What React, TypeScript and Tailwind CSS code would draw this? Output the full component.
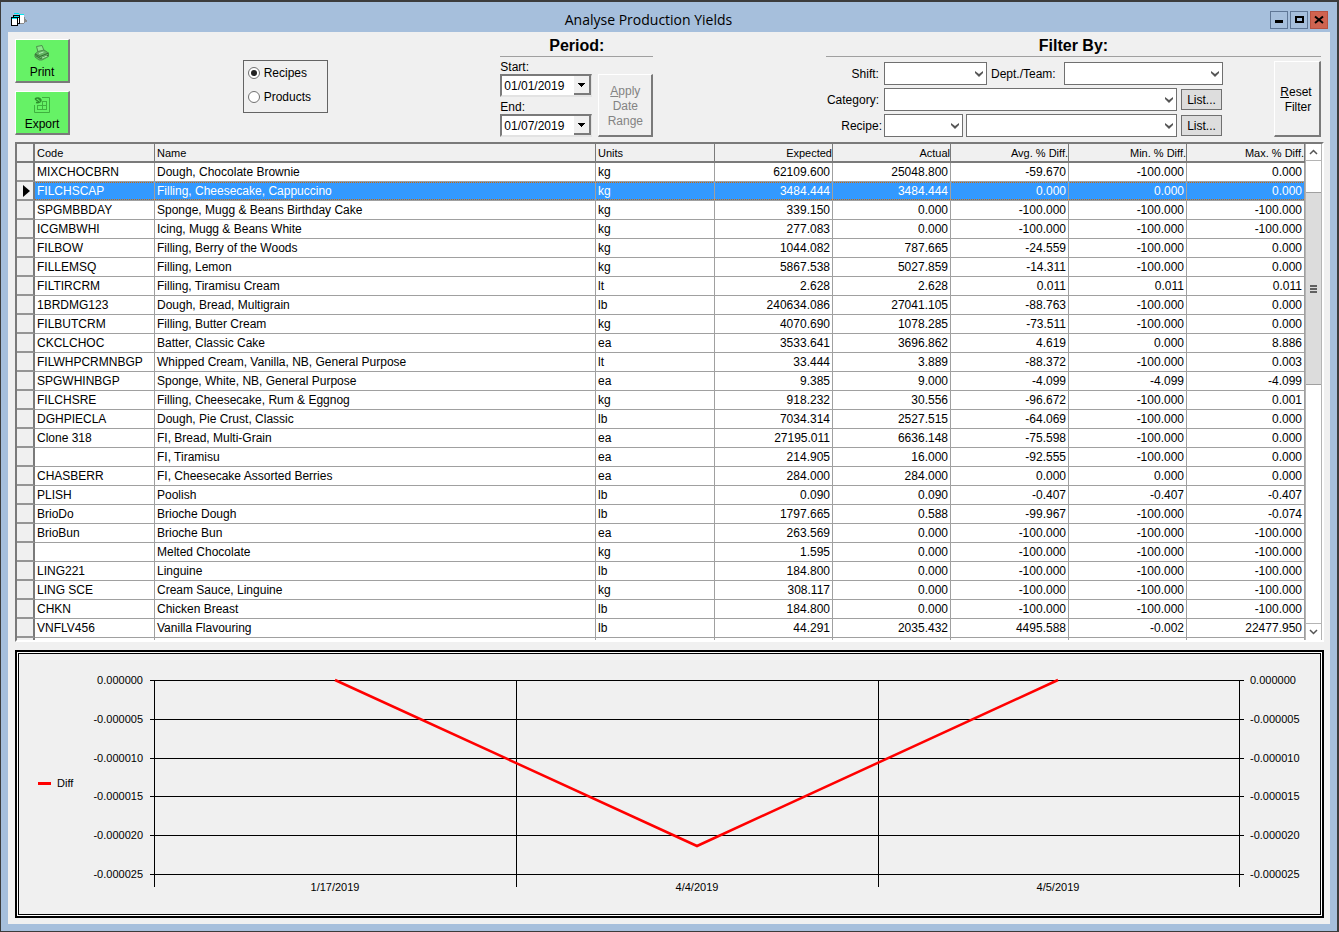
import { useState } from "react";
import type { ReactNode } from "react";

type Row = [string, string, string, string, string, string, string, string];

const rows: Row[] = [
  ["MIXCHOCBRN", "Dough, Chocolate Brownie", "kg", "62109.600", "25048.800", "-59.670", "-100.000", "0.000"],
  ["FILCHSCAP", "Filling, Cheesecake, Cappuccino", "kg", "3484.444", "3484.444", "0.000", "0.000", "0.000"],
  ["SPGMBBDAY", "Sponge, Mugg & Beans Birthday Cake", "kg", "339.150", "0.000", "-100.000", "-100.000", "-100.000"],
  ["ICGMBWHI", "Icing, Mugg & Beans White", "kg", "277.083", "0.000", "-100.000", "-100.000", "-100.000"],
  ["FILBOW", "Filling, Berry of the Woods", "kg", "1044.082", "787.665", "-24.559", "-100.000", "0.000"],
  ["FILLEMSQ", "Filling, Lemon", "kg", "5867.538", "5027.859", "-14.311", "-100.000", "0.000"],
  ["FILTIRCRM", "Filling, Tiramisu Cream", "lt", "2.628", "2.628", "0.011", "0.011", "0.011"],
  ["1BRDMG123", "Dough, Bread, Multigrain", "lb", "240634.086", "27041.105", "-88.763", "-100.000", "0.000"],
  ["FILBUTCRM", "Filling, Butter Cream", "kg", "4070.690", "1078.285", "-73.511", "-100.000", "0.000"],
  ["CKCLCHOC", "Batter, Classic Cake", "ea", "3533.641", "3696.862", "4.619", "0.000", "8.886"],
  ["FILWHPCRMNBGP", "Whipped Cream, Vanilla, NB, General Purpose", "lt", "33.444", "3.889", "-88.372", "-100.000", "0.003"],
  ["SPGWHINBGP", "Sponge, White, NB, General Purpose", "ea", "9.385", "9.000", "-4.099", "-4.099", "-4.099"],
  ["FILCHSRE", "Filling, Cheesecake, Rum & Eggnog", "kg", "918.232", "30.556", "-96.672", "-100.000", "0.001"],
  ["DGHPIECLA", "Dough, Pie Crust, Classic", "lb", "7034.314", "2527.515", "-64.069", "-100.000", "0.000"],
  ["Clone 318", "FI, Bread, Multi-Grain", "ea", "27195.011", "6636.148", "-75.598", "-100.000", "0.000"],
  ["", "FI, Tiramisu", "ea", "214.905", "16.000", "-92.555", "-100.000", "0.000"],
  ["CHASBERR", "FI, Cheesecake Assorted Berries", "ea", "284.000", "284.000", "0.000", "0.000", "0.000"],
  ["PLISH", "Poolish", "lb", "0.090", "0.090", "-0.407", "-0.407", "-0.407"],
  ["BrioDo", "Brioche Dough", "lb", "1797.665", "0.588", "-99.967", "-100.000", "-0.074"],
  ["BrioBun", "Brioche Bun", "ea", "263.569", "0.000", "-100.000", "-100.000", "-100.000"],
  ["", "Melted Chocolate", "kg", "1.595", "0.000", "-100.000", "-100.000", "-100.000"],
  ["LING221", "Linguine", "lb", "184.800", "0.000", "-100.000", "-100.000", "-100.000"],
  ["LING SCE", "Cream Sauce, Linguine", "kg", "308.117", "0.000", "-100.000", "-100.000", "-100.000"],
  ["CHKN", "Chicken Breast", "lb", "184.800", "0.000", "-100.000", "-100.000", "-100.000"],
  ["VNFLV456", "Vanilla Flavouring", "lb", "44.291", "2035.432", "4495.588", "-0.002", "22477.950"],
  ["", "", "", "", "", "", "", ""],
];

const headers = ["Code", "Name", "Units", "Expected", "Actual", "Avg. % Diff.", "Min. % Diff.", "Max. % Diff."];

const raised =
  "border-t border-l border-r-2 border-b-2 border-t-white border-l-white border-r-[#7a7a7a] border-b-[#7a7a7a]";

const focusRow =
  "bg-[#3399ff] bg-[image:linear-gradient(90deg,#cc6600_50%,transparent_50%),linear-gradient(90deg,#cc6600_50%,transparent_50%)] bg-[length:2px_1px] bg-repeat-x";
// The dots of neighbouring cells join into one line when odd-width columns swap phase.
const evenDots = "bg-[position:0_0,1px_100%]";
const oddDots = "bg-[position:1px_0,0_100%]";

function AppIcon() {
  return (
    <svg width="16" height="14" viewBox="0 0 16 14" shapeRendering="crispEdges" aria-hidden="true">
      <path d="M6 2h7v2h1v6H6z" fill="#fff" />
      <path d="M3 0h5v1h5v1H8V1H3z" fill="#00e5ee" />
      <path d="M13 4h1v2h1v1h1v2h-2v1h-1z" fill="#8a8a8a" />
      <path d="M9 10h4v1H9z" fill="#8a8a8a" />
      <path d="M2 2h7v9H7V4H2z" fill="#000" />
      <path d="M3 3h5v1H3z" fill="#00e5ee" />
      <path d="M0 4h7v9H0z" fill="#000" />
      <path d="M1 6h5v6H1z" fill="#fff" />
      <path d="M1 5h5v1H1z" fill="#00e5ee" />
      <path d="M7 5h1v5H7z" fill="#fff" />
    </svg>
  );
}

function PrinterIcon() {
  return (
    <svg width="16" height="16" viewBox="0 0 16 16" fill="none" stroke="#4d8f4d" aria-hidden="true">
      <path d="M4 7 L2.500 1.500 L8 .5 L10 5.500" fill="#8be88b" />
      <path d="M1 9 L4 6.500 L10 5 L14.500 8 L14.500 11.500 L8 15 L5 15 L1 12 Z" fill="#62b562" />
      <path d="M1 9 L6 11.500 L14.500 8M1.500 10.500 L6.500 13.500 L14.500 10" stroke="#2f6f2f" />
      <path d="M5 8.500 L9.500 7M8 13 L13 11" stroke="#b4efb4" />
    </svg>
  );
}

function SheetIcon() {
  return (
    <svg width="16" height="16" viewBox="0 0 16 16" fill="none" stroke="#3fb03f" aria-hidden="true">
      <path d="M8 .5 H15.500 V15.500 H.5 V8" />
      <path d="M3 8.500 H13M3 12.500 H13M3.500 8 V13M8.500 4 V13M12.500 4 V13M8 4.500 H13" />
      <path d="M1 2 C3 0 6 1 7 3 C7 5 5 6 2 5.500M1 2 L5 5M4 1 L7 4" stroke="#2d8f2d" strokeWidth="1.500" />
    </svg>
  );
}

function ActionButton({ icon, label }: { icon: ReactNode; label: string }) {
  return (
    <button
      type="button"
      className={`flex h-11 w-[55px] flex-col items-center justify-end gap-1 bg-[#66f266] pb-0.5 leading-[14px] ${raised}`}
    >
      {icon}
      {label}
    </button>
  );
}

function Combo({ label, className }: { label: string; className: string }) {
  return (
    <span className={`relative flex ${className}`}>
      <select aria-label={label} className="h-[23px] w-full appearance-none border border-[#707070] bg-white" />
      <svg
        width="8"
        height="6"
        viewBox="0 0 8 6"
        className="pointer-events-none absolute top-[9px] right-1"
        aria-hidden="true"
      >
        <path d="M0 0 L4 3 L8 0 V2 L4 6 L0 2 Z" fill="#555" />
      </svg>
    </span>
  );
}

function DateField({ id, label, value }: { id: string; label: string; value: string }) {
  return (
    <div className="flex flex-col">
      <label htmlFor={id} className="h-[15px] leading-4">
        {label}
      </label>
      <div className="flex h-[23px] w-[92px] border-2 border-r border-t-[#7a7a7a] border-r-[#e3e3e3] border-b-[#e3e3e3] border-l-[#7a7a7a] bg-white">
        <input id={id} defaultValue={value} className="min-w-0 flex-1 pl-0.5 outline-none" />
        <button
          type="button"
          aria-label={`Choose ${label}`}
          className="flex w-[17px] items-center justify-center border-r-2 border-b-2 border-[#7a7a7a] bg-[#f0f0f0]"
        >
          <svg width="7" height="4" viewBox="0 0 7 4" shapeRendering="crispEdges" aria-hidden="true">
            <path d="M0 0h7v1H6v1H5v1H4v1H3V3H2V2H1V1H0z" />
          </svg>
        </button>
      </div>
    </div>
  );
}

function ListButton() {
  return (
    <button type="button" className="h-[21px] w-[41px] border border-[#707070] bg-[#dddddd]">
      List...
    </button>
  );
}

function TitleBar() {
  return (
    <header className="flex h-[30px] items-center pt-1.5 pr-0.5 pl-[3px]">
      <AppIcon />
      <h1 className="flex-1 text-center font-['Open_Sans',sans-serif] text-[14px] leading-5">
        Analyse Production Yields
      </h1>
      <div className="flex gap-0.5">
        <button
          type="button"
          aria-label="Minimise"
          className="flex h-[18px] w-[18px] items-center justify-center border border-[#5f7796]"
        >
          <svg width="10" height="10" viewBox="0 0 10 10" shapeRendering="crispEdges" aria-hidden="true">
            <path d="M1 5h8v3H1z" />
          </svg>
        </button>
        <button
          type="button"
          aria-label="Maximise"
          className="flex h-[18px] w-[18px] items-center justify-center border border-[#5f7796]"
        >
          <svg width="10" height="10" viewBox="0 0 10 10" shapeRendering="crispEdges" aria-hidden="true">
            <path d="M1 1h9v7H1zM3 3v3h5V3z" fillRule="evenodd" />
          </svg>
        </button>
        <button
          type="button"
          aria-label="Close"
          className="flex h-[18px] w-[18px] items-center justify-center border border-[#b8503f] bg-[#cf6350]"
        >
          <svg width="10" height="10" viewBox="0 0 10 10" aria-hidden="true">
            <path d="M1 1.500 L9 8 M9 1.500 L1 8" stroke="#000" strokeWidth="2" />
          </svg>
        </button>
      </div>
    </header>
  );
}

function Toolbar() {
  const [kind, setKind] = useState("Recipes");
  return (
    <div className="flex h-[110px] items-start justify-between pr-[3px]">
      <div className="flex flex-col gap-2 pt-[7px]">
        <ActionButton icon={<PrinterIcon />} label="Print" />
        <ActionButton icon={<SheetIcon />} label="Export" />
      </div>

      <fieldset className="mt-7 flex h-[53px] w-[85px] flex-col gap-2 border border-[#646464] pt-1 pl-1">
        {["Recipes", "Products"].map((option) => (
          <label key={option} className="flex items-center gap-1 leading-4">
            <input
              type="radio"
              name="kind"
              checked={kind === option}
              onChange={() => setKind(option)}
              className="flex h-3 w-3 appearance-none items-center justify-center rounded-full border border-[#707070] bg-white before:h-1.5 before:w-1.5 before:rounded-full checked:before:bg-[#222]"
            />
            {option}
          </label>
        ))}
      </fieldset>

      <section className="w-[153px] pt-1">
        <h2 className="border-b border-[#a0a0a0] text-center text-[16px] leading-5 font-bold">Period:</h2>
        <div className="flex justify-between pt-0.5">
          <div className="flex flex-col gap-0.5">
            <DateField id="start" label="Start:" value="01/01/2019" />
            <DateField id="end" label="End:" value="01/07/2019" />
          </div>
          <button
            type="button"
            disabled
            className={`mt-[15px] flex h-[63px] w-[55px] flex-col items-center justify-center pt-0.5 leading-[15px] text-[#838383] ${raised}`}
          >
            <span>
              <u>A</u>pply
            </span>
            <span>Date</span>
            <span>Range</span>
          </button>
        </div>
      </section>

      <section className="w-[495px] pt-1">
        <h2 className="border-b border-[#a0a0a0] text-center text-[16px] leading-5 font-bold">Filter By:</h2>
        <div className="flex justify-between pt-1">
          <div className="flex flex-col gap-[3px] pt-px">
            <div className="flex items-center">
              <span className="w-[53px] text-right">Shift:</span>
              <Combo label="Shift" className="ml-[5px] w-[103px]" />
              <span className="ml-1 w-[73px]">Dept./Team:</span>
              <Combo label="Dept./Team" className="w-[159px]" />
            </div>
            <div className="flex items-center">
              <span className="w-[53px] text-right">Category:</span>
              <Combo label="Category" className="mr-1 ml-[5px] w-[293px]" />
              <ListButton />
            </div>
            <div className="flex items-center">
              <span className="w-[56px] text-right">Recipe:</span>
              <Combo label="Recipe code" className="ml-0.5 w-[79px]" />
              <Combo label="Recipe name" className="mr-1 ml-[3px] w-[211px]" />
              <ListButton />
            </div>
          </div>
          <button
            type="button"
            className={`flex h-[76px] w-[47px] flex-col items-center justify-center pt-0.5 pr-0.5 leading-[15px] ${raised}`}
          >
            <span>
              <u>R</u>eset
            </span>
            <span className="pl-1">Filter</span>
          </button>
        </div>
      </section>
    </div>
  );
}

function YieldTable() {
  const [selected, setSelected] = useState(1);
  return (
    <div className="flex h-[500px] overflow-hidden border-2 border-t-[#7a7a7a] border-r-white border-b-white border-l-[#7a7a7a] bg-white">
      <div className="min-w-0 flex-1 overflow-hidden">
        <table className="w-full table-fixed border-separate border-spacing-0">
          <colgroup>
            <col className="w-[18px]" />
            <col className="w-[120px]" />
            <col />
            <col className="w-[119px]" />
            <col className="w-[118px]" />
            <col className="w-[118px]" />
            <col className="w-[118px]" />
            <col className="w-[118px]" />
            <col className="w-[118px]" />
          </colgroup>
          <thead>
            <tr className="h-[19px] bg-[#f0f0f0] text-[11px] leading-[15px]">
              <th aria-label="Row marker" className="border-r-2 border-b-2 border-[#7a7a7a] p-0" />
              {headers.map((header, i) => (
                <th
                  key={header}
                  className={`border-r border-b-2 border-[#7a7a7a] pt-0.5 pb-0 font-normal whitespace-nowrap ${
                    i < 3 ? "pr-0 pl-0.5 text-left" : "px-0 text-right"
                  }`}
                >
                  {header}
                </th>
              ))}
            </tr>
          </thead>
          <tbody>
            {rows.map((row, r) => (
              <tr
                key={r}
                onClick={() => setSelected(r)}
                className={`h-[19px] leading-[18px] ${r === selected ? "text-white" : ""}`}
              >
                <td className="border-r-2 border-b-2 border-r-[#7a7a7a] border-b-[#959595] bg-[#f0f0f0] p-0">
                  {r === selected && (
                    <svg width="7" height="12" viewBox="0 0 7 12" className="ml-[6px]" aria-hidden="true">
                      <path d="M0 0 L7 6 L0 12 Z" fill="#000" />
                    </svg>
                  )}
                </td>
                {row.map((cell, c) => (
                  <td
                    key={c}
                    className={`border-r border-b border-[#a0a0a0] py-0 whitespace-nowrap ${
                      c < 3 ? "pr-0 pl-0.5" : "pr-0.5 pl-0 text-right"
                    } ${r === selected ? `${focusRow} ${c === 2 ? evenDots : oddDots}` : ""}`}
                  >
                    {cell}
                  </td>
                ))}
              </tr>
            ))}
          </tbody>
        </table>
      </div>
      <div className="flex w-[17px] flex-col border-r border-l border-[#b4b4b4] bg-white">
        <button
          type="button"
          aria-label="Scroll up"
          className="flex h-[17px] items-center justify-center border-b border-[#b4b4b4]"
        >
          <svg width="9" height="6" viewBox="0 0 9 6" fill="none" stroke="#555" strokeWidth="1.500" aria-hidden="true">
            <path d="M1 5 L4.500 1.500 L8 5" />
          </svg>
        </button>
        <div className="flex-1 pt-[31px]">
          <div className="flex h-[193px] flex-col items-center justify-center gap-px border-y border-[#a0a0a0] bg-[#dcdcdc]">
            <span className="h-0.5 w-[7px] bg-[#606060]" />
            <span className="h-0.5 w-[7px] bg-[#606060]" />
            <span className="h-0.5 w-[7px] bg-[#606060]" />
          </div>
        </div>
        <button
          type="button"
          aria-label="Scroll down"
          className="flex h-[17px] items-center justify-center border-t border-[#b4b4b4]"
        >
          <svg width="9" height="6" viewBox="0 0 9 6" fill="none" stroke="#555" strokeWidth="1.500" aria-hidden="true">
            <path d="M1 1 L4.500 4.500 L8 1" />
          </svg>
        </button>
      </div>
    </div>
  );
}

const ticks = [
  { y: 26, label: "0.000000" },
  { y: 65, label: "-0.000005" },
  { y: 104, label: "-0.000010" },
  { y: 142, label: "-0.000015" },
  { y: 181, label: "-0.000020" },
  { y: 220, label: "-0.000025" },
];
const dates = [
  { x: 316, label: "1/17/2019" },
  { x: 678, label: "4/4/2019" },
  { x: 1039, label: "4/5/2019" },
];
const dividers = [135, 497, 859, 1220];

function DiffChart() {
  return (
    <div className="mt-2 border-2 border-black bg-white p-px">
      <div className="border border-black bg-[#f0f0f0]">
        <svg viewBox="0 0 1301 260" className="block w-full" fontSize="11" role="img" aria-label="Diff by date">
          <g fill="#000" shapeRendering="crispEdges">
            {ticks.map((t) => (
              <rect key={t.y} x="131" y={t.y} width="1094" height="1" />
            ))}
            {dividers.map((x) => (
              <rect key={x} x={x} y="26" width="1" height="207" />
            ))}
          </g>
          {ticks.map((t) => (
            <g key={t.y}>
              <text x="124" y={t.y + 4} textAnchor="end">
                {t.label}
              </text>
              <text x="1231" y={t.y + 4}>
                {t.label}
              </text>
            </g>
          ))}
          {dates.map((d) => (
            <text key={d.label} x={d.x} y="237" textAnchor="middle">
              {d.label}
            </text>
          ))}
          <path d="M316 26 L678 192 L1039 26" fill="none" stroke="#f00" strokeWidth="2.500" />
          <rect x="19" y="128" width="13" height="3" fill="#f00" />
          <text x="38" y="133">
            Diff
          </text>
        </svg>
      </div>
    </div>
  );
}

export default function App() {
  return (
    <div className="border border-t-2 border-r-2 border-[#3c3c3c] bg-[#a6bfdc] px-[7px] pb-[7px] font-['Liberation_Sans',Arial,sans-serif] text-[12px] text-black">
      <TitleBar />
      <main className="bg-[#f0f0f0] pr-1.5 pb-1.5 pl-[7px]">
        <Toolbar />
        <YieldTable />
        <DiffChart />
      </main>
    </div>
  );
}
